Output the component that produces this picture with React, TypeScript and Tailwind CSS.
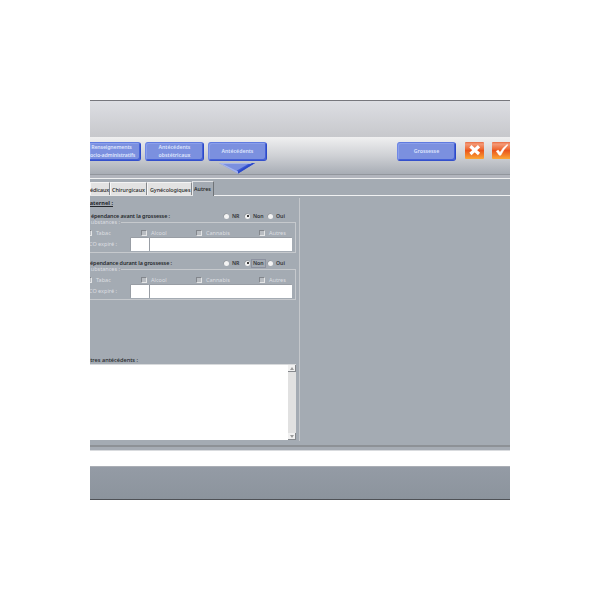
import React from "react";

const clip = "flex justify-end whitespace-nowrap";

function NavButton({ className, lines }: { className: string; lines: string[] }) {
  return (
    <div
      className={`flex shrink-0 flex-col justify-center rounded-[3px] border border-t-[#5f7be0] border-l-[#6f88e6] border-r-[#2c49c8] border-b-[#3450cb] bg-[#7b90df] pb-[1px] text-center text-[5.2px] font-semibold leading-[8px] text-[#dfe5fd] shadow-[inset_-1px_-1px_0_#4460d6,inset_1px_1px_0_#8b9fea] ${className}`}
    >
      {lines.map((l) => (
        <div key={l} className="whitespace-nowrap">{l}</div>
      ))}
    </div>
  );
}

function Tab({ className, children }: { className: string; children: React.ReactNode }) {
  return (
    <div className={`h-[13px] shrink-0 whitespace-nowrap border-t border-r border-t-[#f4f4f4] border-r-[#85888c] bg-[#e2e2e2] text-[5.4px] font-medium leading-[14px] text-[#222] shadow-[inset_1px_0_0_#f6f6f6] ${className}`}>
      {children}
    </div>
  );
}

function Radio({ label, on, focus, className }: { label: string; on?: boolean; focus?: boolean; className: string }) {
  return (
    <div className={`flex shrink-0 items-center ${className}`}>
      <span className="flex size-[5px] items-center justify-center rounded-full bg-[#f4f4f4] shadow-[-0.5px_-0.5px_0_0_#8a8e93]">
        {on && <span className="size-[2px] rounded-full bg-black" />}
      </span>
      <span className={`ml-[2px] px-px text-[5.2px] font-semibold leading-[7px] text-[#303236] ${focus ? "outline outline-1 outline-[#8d92a0]" : ""}`}>{label}</span>
    </div>
  );
}

function Check({ label, className }: { label: string; className: string }) {
  return (
    <div className={`flex shrink-0 items-center ${className}`}>
      <span className="size-[6px] shrink-0 border border-t-[#82868c] border-l-[#82868c] border-r-[#e4e5e6] border-b-[#e4e5e6] bg-[#b9bdc2]" />
      <span className="ml-[4px] whitespace-nowrap text-[5.5px] leading-[7px] text-[#dcdee1]">{label}</span>
    </div>
  );
}

function Substances({ title, focus }: { title: string; focus?: boolean }) {
  return (
    <div className={`flex w-[206px] flex-col ${focus ? "h-[48px]" : "h-[47px]"}`}>
      <div className="flex h-[10px] items-start text-[5.4px] font-semibold leading-[8px] text-[#25282c]">
        <div className={`${focus ? "w-[82px] tracking-[-0.08px]" : "w-[80px] tracking-[-0.08px]"} ${clip}`}>{title}</div>
        <div className="ml-auto flex h-[8px] items-center">
          <Radio label="NR" className="w-[21px]" />
          <Radio label="Non" on focus={focus} className="w-[23px]" />
          <Radio label="Oui" className="w-[28px]" />
        </div>
      </div>
      <div className="flex h-[31px] flex-col border-r border-b border-[#c6c9cd]">
        <div className="-mt-[3px] flex h-[7px] shrink-0 items-center">
          <div className={`w-[30px] text-[5.5px] leading-[7px] text-[#dcdee1] ${clip}`}>ubstances :</div>
          <div className="ml-[1px] h-px flex-1 bg-[#c6c9cd]" />
        </div>
        <div className="mt-[2px] flex h-[10px] shrink-0 items-center">
          <Check label="Tabac" className="-ml-[4px] w-[55px]" />
          <Check label="Alcool" className="w-[55px]" />
          <Check label="Cannabis" className="w-[63px]" />
          <Check label="Autres" className="w-[28px]" />
        </div>
        <div className="flex h-[13px] shrink-0">
          <div className={`w-[27px] text-[5.5px] leading-[13px] text-[#dcdee1] ${clip}`}>CO expiré :</div>
          <div className="ml-[14px] w-[18px] bg-white shadow-[-0.5px_-0.5px_0_#8b9096]" />
          <div className="ml-[1px] w-[142px] bg-white shadow-[-0.5px_-0.5px_0_#8b9096]" />
        </div>
      </div>
    </div>
  );
}

function IconButton({ className, ok }: { className: string; ok?: boolean }) {
  return (
    <svg className={`shrink-0 ${className}`} width="19" height="17" viewBox="0 0 19 17">
      <defs>
        <linearGradient id={ok ? "okFill" : "noFill"} x1="0" y1="0" x2="0" y2="1">
          <stop offset="0" stopColor="#e9693e" />
          <stop offset=".12" stopColor="#f39a78" />
          <stop offset=".42" stopColor="#ee6a35" />
          <stop offset=".5" stopColor="#ea541b" />
          <stop offset="1" stopColor="#fca636" />
        </linearGradient>
      </defs>
      <rect width="19" height="17" rx="1" fill={`url(#${ok ? "okFill" : "noFill"})`} />
      {ok ? (
        <path d="M4.3 9.2 L6.2 8 L8 10.4 Q11 5.2 15.3 2.4 L15.8 3 Q11.5 7.6 8.8 13.2 L7.2 13.2 Z" fill="#fff" stroke="#fff" strokeWidth=".5" />
      ) : (
        <path d="M5.4 4.2 L14 12 M14 4.2 L5.4 12" stroke="#fff" strokeWidth="3.2" />
      )}
    </svg>
  );
}

function ScrollArrow({ up }: { up?: boolean }) {
  return (
    <div className="flex h-[7px] items-center justify-center border-r border-b border-[#85888c] bg-[#f1f1f1]">
      <svg width="4" height="3" viewBox="0 0 4 3">
        <path d={up ? "M0 3 L2 0 L4 3Z" : "M0 0 L4 0 L2 3Z"} fill="#9a9a9a" />
      </svg>
    </div>
  );
}

export default function App() {
  return (
    <div className="h-[600px] w-[600px] overflow-hidden bg-white px-[90px] pt-[100px] font-['Noto_Sans',sans-serif]">
      <div className="flex h-[400px] w-[420px] flex-col overflow-hidden bg-[#a4abb3]">
        <div className="h-[37px] shrink-0 border-t border-[#77777d] bg-linear-to-b from-[#dddee3] to-[#c7c8cc]" />
        <div className="flex h-[38px] shrink-0 items-start border-b border-[#92969d] bg-linear-to-b from-[#f0f0f1] via-[#cfd1d5] to-[#a8adb5]">
          <NavButton className="mt-[5px] h-[19px] w-[51px] rounded-l-none border-l-0 pr-[7px] tracking-[-0.12px]" lines={["Renseignements", "ocio-administratifs"]} />
          <NavButton className="mt-[5px] ml-[4px] h-[19px] w-[59px]" lines={["Antécédents", "obstétricaux"]} />
          <div className="ml-[4px] flex flex-col items-center pt-[5px]">
            <NavButton className="h-[19px] w-[59px]" lines={["Antécédents"]} />
            <svg className="mt-[2px]" width="37" height="11" viewBox="0 0 37 11">
              <path d="M0 0 H36 L19 10.5Z" fill="#7b90df" />
              <path d="M36 0 L19 10.5 L18 7.5 L31 0Z" fill="#3c58d4" />
              <path d="M0 0 H36 L34 1 H4 L19 8.5 V10.5Z" fill="#a5b4ee" />
              <path d="M36 0 L19 10.5 V8.5 L33 0Z" fill="#2c49c8" />
            </svg>
          </div>
          <NavButton className="mt-[5px] ml-[130px] h-[19px] w-[59px]" lines={["Grossesse"]} />
          <IconButton className="mt-[5px] ml-[9px]" />
          <IconButton ok className="mt-[5px] ml-[8px]" />
        </div>
        <div className="h-[3px] shrink-0 bg-[#b2b5bd]" />
        <div className="h-px shrink-0 bg-[#f0f1f2]" />
        <div className="flex h-[17px] shrink-0 items-end">
          <div className="flex w-[102px] items-end border-b border-[#e8e9ea]">
            <Tab className="w-[20px] tracking-[-0.12px]">édicaux</Tab>
            <Tab className="w-[37px] pl-[2px]">Chirurgicaux</Tab>
            <Tab className="w-[45px] pl-[3px] tracking-[-0.05px]">Gynécologiques</Tab>
          </div>
          <div className="h-[15px] w-[22px] border-t border-r border-l border-t-[#dfe1e3] border-r-[#6f7377] border-l-[#e8e9ea] bg-[#a4abb3] pl-[1px] text-[5.4px] font-medium leading-[15px] text-[#222]">Autres</div>
          <div className="h-px flex-1 bg-[#f0f1f2]" />
        </div>
        <div className="flex h-[249px] shrink-0">
          <div className="flex w-[209px] flex-col">
            <div className={`mt-[3px] h-[13px] w-[23px] text-[5.6px] font-bold leading-[8px] text-[#25282c] underline ${clip}`}>aternel :</div>
            <Substances title="épendance avant la grossesse :" />
            <Substances title="épendance durant la grossesse :" focus />
            <div className={`mt-[49px] h-[8px] w-[48px] text-[5.6px] font-medium leading-[8px] text-[#25282c] ${clip}`}>tres antécédents :</div>
            <div className="flex h-[76px] w-[206px] border-t border-[#d8dadc]">
              <div className="flex-1 bg-white" />
              <div className="flex w-[8px] flex-col justify-between bg-[#e1e1e1]">
                <ScrollArrow up />
                <ScrollArrow />
              </div>
            </div>
          </div>
          <div className="mt-[2px] h-[243px] w-px bg-[#c4c7cb]" />
        </div>
        <div className="h-[2px] shrink-0 bg-[#8d9196]" />
        <div className="h-[3px] shrink-0 bg-[#a6acb4]" />
        <div className="h-[16px] shrink-0 border-t border-[#d9dbde] bg-white" />
        <div className="flex-1 border-t border-b border-t-[#aaaeb5] border-b-[#4e5156] bg-linear-to-b from-[#949ba5] to-[#8c949d]" />
      </div>
    </div>
  );
}
